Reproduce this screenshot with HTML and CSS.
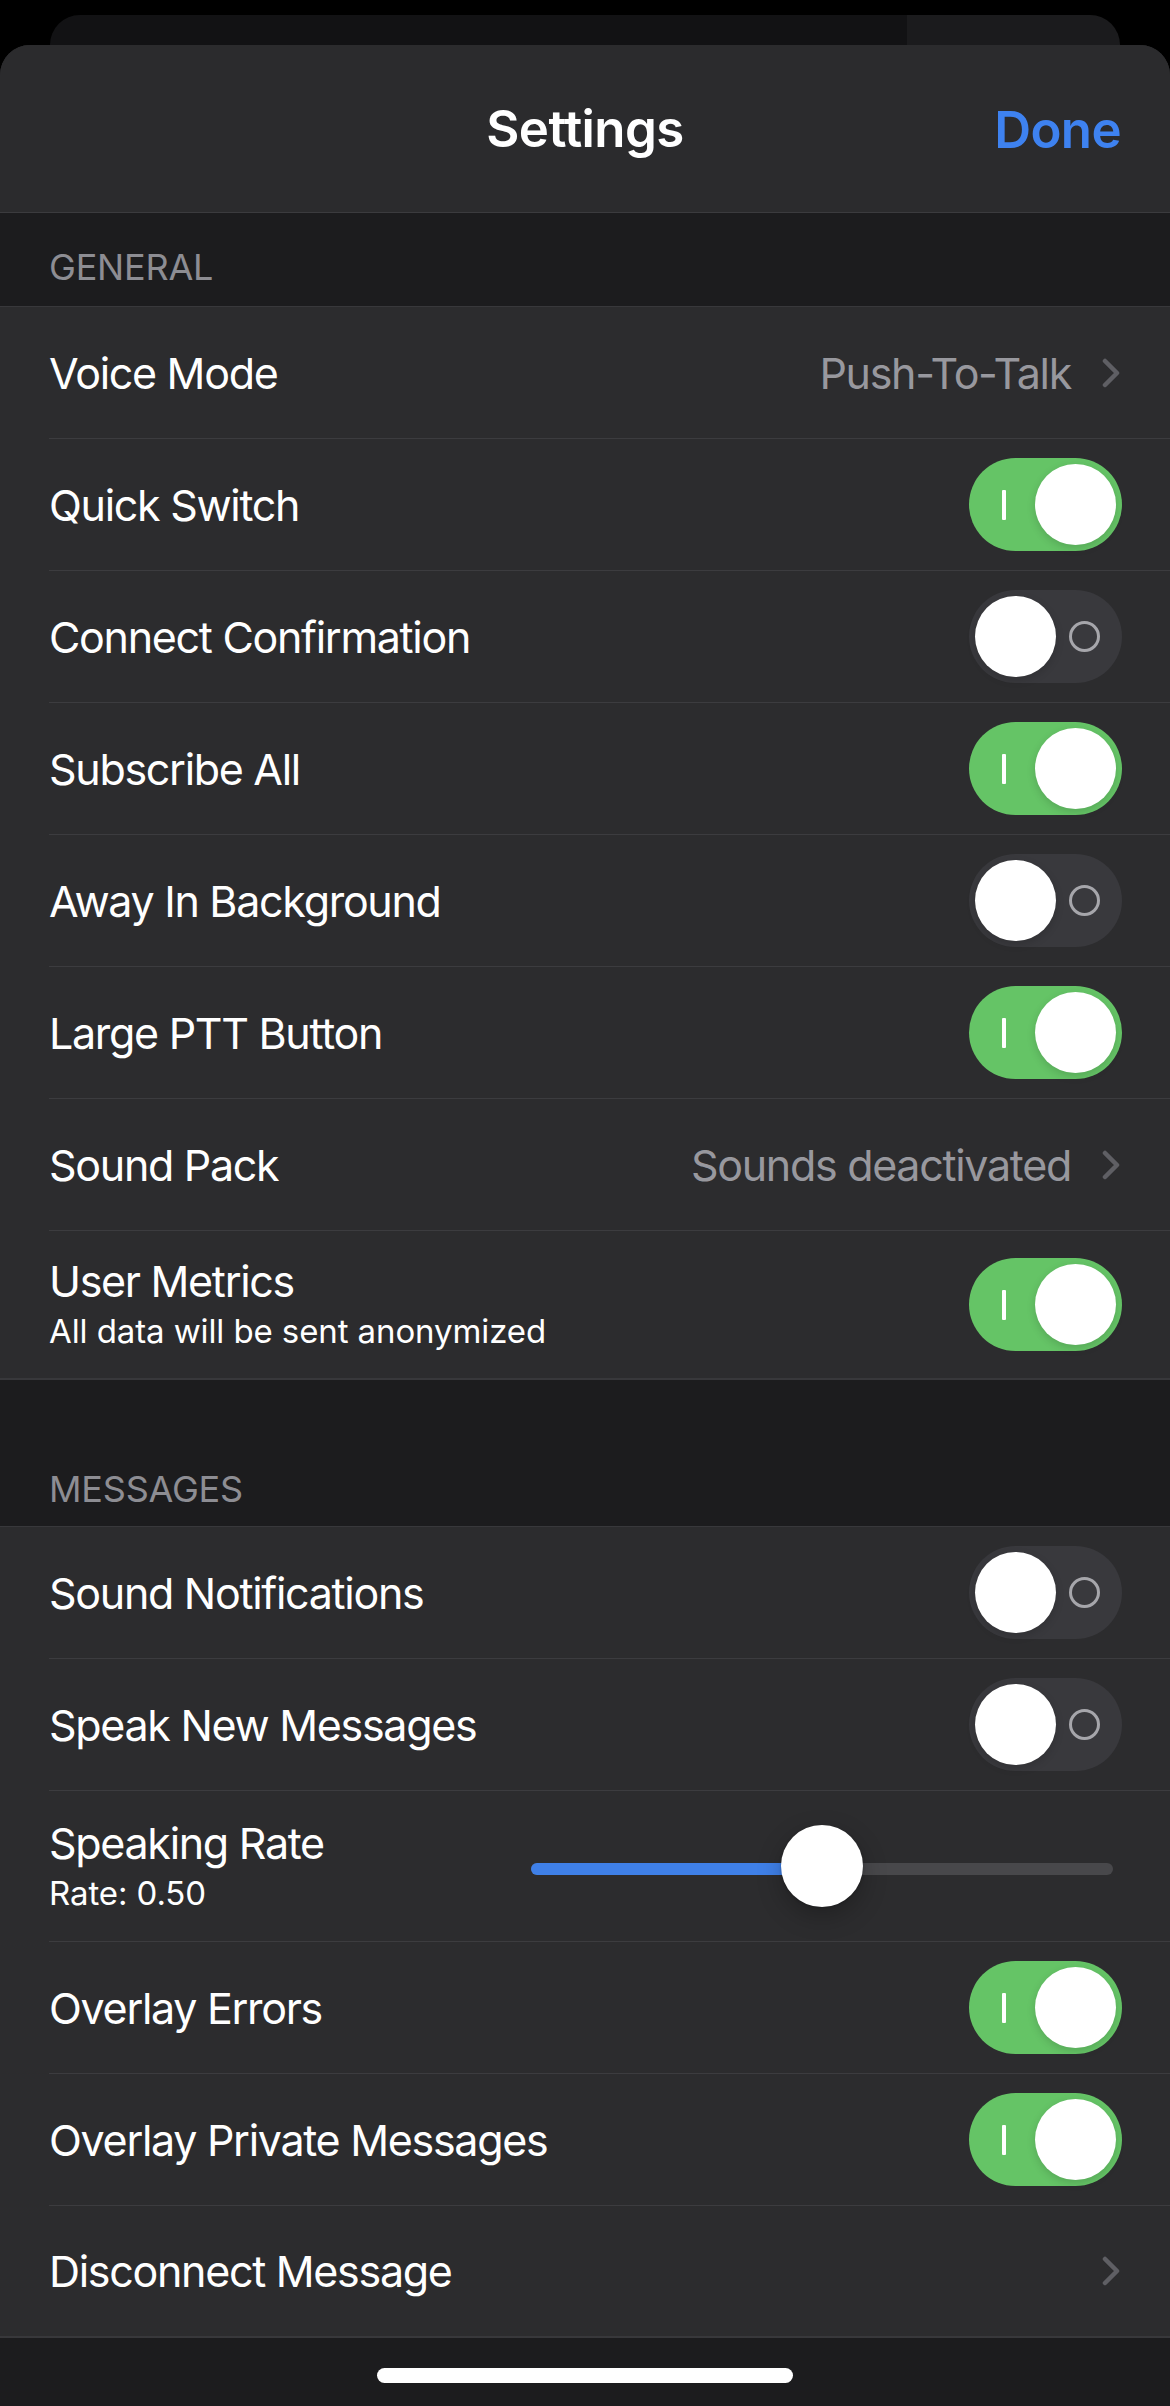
FILE: index.html
```html
<!DOCTYPE html>
<html>
<head>
<meta charset="utf-8">
<link rel="stylesheet" href="styles.css">
</head>
<body>
<div class="screen">
  <div class="backcard"></div>
  <div class="sheet">
    <header class="navbar">
      <div class="nav-title">Settings</div>
      <div class="nav-done">Done</div>
    </header>

    <div class="section-header general"><span>GENERAL</span></div>
    <div class="group">
      <div class="row">
        <div class="label">Voice Mode</div>
        <div class="value">Push-To-Talk</div>
        <svg class="chevron" viewBox="0 0 18 30"><path d="M3 3 L15 15 L3 27" /></svg>
      </div>
      <div class="row">
        <div class="label">Quick Switch</div>
        <div class="toggle on"><span class="mark"></span><span class="knob"></span></div>
      </div>
      <div class="row">
        <div class="label">Connect Confirmation</div>
        <div class="toggle off"><span class="knob"></span><span class="mark"></span></div>
      </div>
      <div class="row">
        <div class="label">Subscribe All</div>
        <div class="toggle on"><span class="mark"></span><span class="knob"></span></div>
      </div>
      <div class="row">
        <div class="label">Away In Background</div>
        <div class="toggle off"><span class="knob"></span><span class="mark"></span></div>
      </div>
      <div class="row">
        <div class="label">Large PTT Button</div>
        <div class="toggle on"><span class="mark"></span><span class="knob"></span></div>
      </div>
      <div class="row">
        <div class="label">Sound Pack</div>
        <div class="value">Sounds deactivated</div>
        <svg class="chevron" viewBox="0 0 18 30"><path d="M3 3 L15 15 L3 27" /></svg>
      </div>
      <div class="row tall last">
        <div class="label-stack">
          <div class="label">User Metrics</div>
          <div class="sublabel">All data will be sent anonymized</div>
        </div>
        <div class="toggle on"><span class="mark"></span><span class="knob"></span></div>
      </div>
    </div>

    <div class="section-header messages"><span>MESSAGES</span></div>
    <div class="group">
      <div class="row">
        <div class="label">Sound Notifications</div>
        <div class="toggle off"><span class="knob"></span><span class="mark"></span></div>
      </div>
      <div class="row">
        <div class="label">Speak New Messages</div>
        <div class="toggle off"><span class="knob"></span><span class="mark"></span></div>
      </div>
      <div class="row tall slider-row">
        <div class="label-stack">
          <div class="label">Speaking Rate</div>
          <div class="sublabel">Rate: 0.50</div>
        </div>
        <div class="slider">
          <div class="track"><div class="fill" style="width:50%"></div></div>
          <div class="thumb" style="left:50%"></div>
        </div>
      </div>
      <div class="row">
        <div class="label">Overlay Errors</div>
        <div class="toggle on"><span class="mark"></span><span class="knob"></span></div>
      </div>
      <div class="row">
        <div class="label">Overlay Private Messages</div>
        <div class="toggle on"><span class="mark"></span><span class="knob"></span></div>
      </div>
      <div class="row last">
        <div class="label">Disconnect Message</div>
        <svg class="chevron" viewBox="0 0 18 30"><path d="M3 3 L15 15 L3 27" /></svg>
      </div>
    </div>

    <div class="home-area"><div class="home-indicator"></div></div>
  </div>
</div>
</body>
</html>
```

FILE: styles.css
```css
* { box-sizing: border-box; }

html, body {
  margin: 0;
  padding: 0;
  background: #000;
}

body {
  width: 1170px;
  height: 2406px;
  overflow: hidden;
  font-family: "Inter", "Noto Sans", "Liberation Sans", sans-serif;
  color: #fff;
}

.screen {
  display: flex;
  flex-direction: column;
  height: 2406px;
  padding-top: 15px;
}

.backcard {
  height: 30px;
  margin: 0 50px;
  border-radius: 30px 30px 0 0;
  background: linear-gradient(to right, #121214 0, #121214 857px, #1b1b1d 857px);
}

.sheet {
  flex: 1;
  display: flex;
  flex-direction: column;
  background: #2c2c2e;
  border-radius: 30px 30px 0 0;
  overflow: hidden;
}

.navbar {
  height: 168px;
  flex: none;
  display: flex;
  align-items: center;
  justify-content: center;
  position: relative;
  background: #2b2b2d;
  border-bottom: 1px solid #3b3b3e;
}

.nav-title {
  font-size: 51px;
  font-weight: 600;
  letter-spacing: -0.6px;
}

.nav-done {
  position: absolute;
  right: 49px;
  top: 50%;
  transform: translateY(-50%);
  font-size: 51px;
  font-weight: 600;
  color: #3e82f0;
  letter-spacing: -0.6px;
}

.section-header {
  flex: none;
  background: #1c1c1e;
  display: flex;
  align-items: flex-end;
  padding-left: 49px;
  color: #8d8d93;
  font-size: 36px;
  letter-spacing: -0.2px;
  border-bottom: 1px solid #38383b;
}

.section-header.general {
  height: 94px;
  padding-bottom: 17px;
}

.section-header.messages {
  height: 147px;
  padding-bottom: 15px;
}

.group {
  flex: none;
  padding-left: 49px;
  background: #2c2c2e;
}

.row {
  height: 132px;
  display: flex;
  align-items: center;
  padding-right: 48px;
  border-bottom: 1px solid #3c3c3f;
}

.row.tall {
  height: 149px;
}

.row.slider-row {
  height: 151px;
}

.row.last {
  border-bottom: none;
}

.group .row.last {
  margin-left: -49px;
  padding-left: 49px;
  border-bottom: 2px solid #38383b;
}

.label {
  font-size: 43px;
  letter-spacing: -1.3px;
  flex: 1;
  white-space: nowrap;
}

.label-stack {
  flex: 1;
  display: flex;
  flex-direction: column;
  margin-top: -3px;
}

.label-stack .label {
  flex: none;
  line-height: 54px;
}

.sublabel {
  font-size: 33px;
  letter-spacing: -0.1px;
  line-height: 42px;
  margin-top: 2px;
}

.value {
  font-size: 43px;
  letter-spacing: -1.3px;
  color: #98989e;
  margin-right: 31px;
}

.chevron {
  width: 18px;
  height: 30px;
  flex: none;
  margin-right: 2px;
}

.chevron path {
  fill: none;
  stroke: #5f5f64;
  stroke-width: 4.5;
  stroke-linecap: round;
  stroke-linejoin: round;
}

.toggle {
  width: 153px;
  height: 93px;
  border-radius: 47px;
  flex: none;
  display: flex;
  align-items: center;
  padding: 0 6px;
  position: relative;
}

.toggle.on {
  background: #65c466;
  justify-content: flex-end;
}

.toggle.off {
  background: #39393d;
  justify-content: flex-start;
}

.knob {
  width: 81px;
  height: 81px;
  border-radius: 50%;
  background: #fff;
  box-shadow: 0 3px 8px rgba(0, 0, 0, 0.15);
}

.toggle.on .mark {
  position: absolute;
  left: 33px;
  top: 32px;
  width: 4px;
  height: 30px;
  background: #fff;
  border-radius: 1px;
}

.toggle.off .mark {
  position: absolute;
  right: 22px;
  top: 31px;
  width: 31px;
  height: 31px;
  border-radius: 50%;
  border: 3px solid #a6a6ab;
}

.slider {
  width: 582px;
  height: 82px;
  position: relative;
  display: flex;
  align-items: center;
  margin-right: 9px;
}

.track {
  width: 100%;
  height: 12px;
  border-radius: 6px;
  background: #48484b;
  overflow: hidden;
  margin-top: 6px;
}

.fill {
  height: 100%;
  background: #3f80e8;
}

.thumb {
  position: absolute;
  top: 0;
  width: 82px;
  height: 82px;
  margin-left: -41px;
  border-radius: 50%;
  background: #fff;
  box-shadow: 0 9px 24px rgba(0, 0, 0, 0.25), 0 1px 3px rgba(0, 0, 0, 0.2);
}

.home-area {
  flex: 1;
  background: #1c1c1e;
  display: flex;
  justify-content: center;
  padding-top: 30px;
}

.home-indicator {
  width: 416px;
  height: 15px;
  border-radius: 8px;
  background: #fff;
}
```
